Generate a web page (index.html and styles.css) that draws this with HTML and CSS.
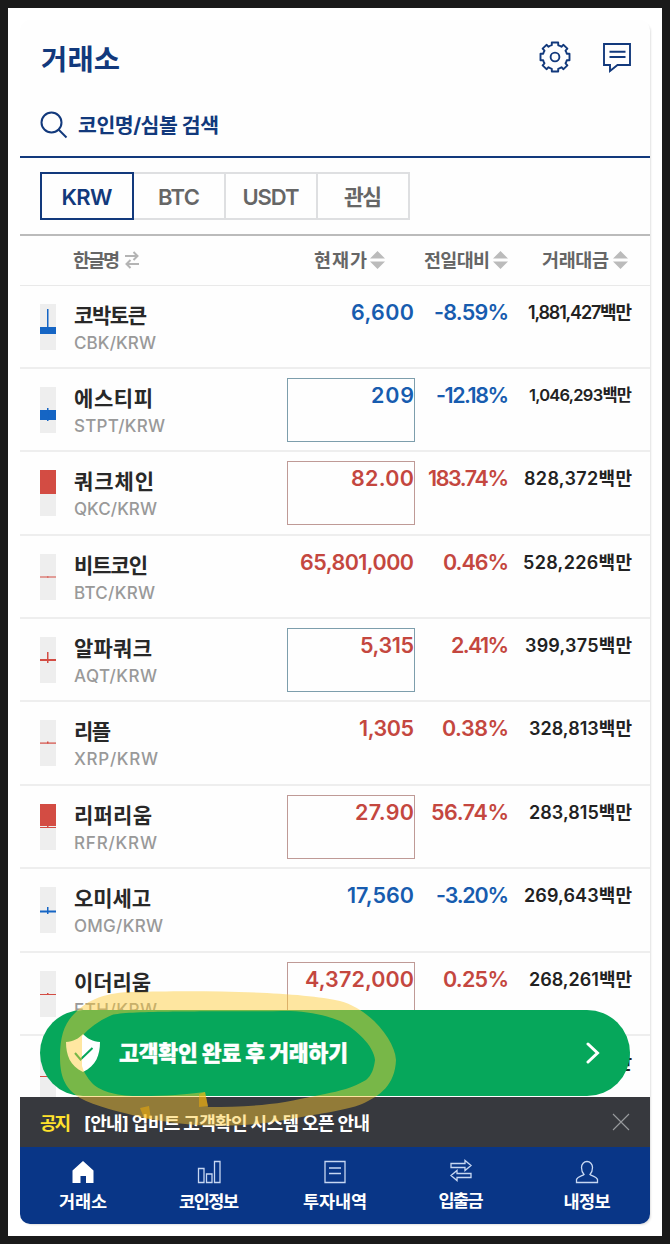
FILE: index.html
```html
<!DOCTYPE html>
<html lang="ko">
<head>
<meta charset="utf-8">
<title>거래소</title>
<link rel="stylesheet" href="styles.css">
</head>
<body>
<div class="frame">
<div class="screen">
  <header class="top">
    <h1 class="title"><span data-w="79">거래소</span></h1>
    <div class="actions">
      <svg width="32" height="32" viewBox="0 0 32 32" fill="none" stroke="#12397c" stroke-width="1.900" stroke-linejoin="round"><path d="M12.800 1.500h6.400v2.700q1.800.4 3.300 1.500l2-1.900 3.900 3.900-1.900 2q1 1.500 1.300 3.100h2.700v6.400h-2.700q-.4 1.700-1.300 3.100l1.900 2-3.900 3.900-2-1.900q-1.500 1-3.300 1.500v2.700h-6.400v-2.700q-1.800-.5-3.300-1.500l-2 1.900-3.900-3.900 1.900-2q-1-1.500-1.300-3.100H1.500v-6.400h2.700q.4-1.700 1.300-3.100l-1.900-2 3.900-3.900 2 1.900q1.500-1 3.300-1.500z"/><circle cx="16" cy="16" r="4.400"/></svg>
      <svg width="30" height="32" viewBox="0 0 30 32" fill="none" stroke="#12397c" stroke-width="1.900"><path d="M2 3h26v21H15.500L8 30v-6H2zM7.500 10.700h16M7.500 16h16"/></svg>
    </div>
  </header>
  <div class="search">
    <svg width="28" height="28" viewBox="0 0 28 28" fill="none" stroke="#12397c" stroke-width="2"><circle cx="11.500" cy="11.500" r="10"/><path d="M18.500 18.500l8 8"/></svg>
    <span class="search-text"><span data-w="141">코인명/심볼 검색</span></span>
  </div>
  <div class="tabs">
    <div class="tab active"><span data-w="51">KRW</span></div>
    <div class="tab"><span data-w="42">BTC</span></div>
    <div class="tab"><span data-w="57">USDT</span></div>
    <div class="tab ko"><span data-w="38">관심</span></div>
  </div>
  <div class="cols">
    <div class="col c-name"><span data-w="47">한글명</span><svg width="16" height="20" viewBox="0 0 16 20" fill="none" stroke="#b4b4b4" stroke-width="2"><path d="M1 6h12M9.500 2l4 4-4 4M15 14H3M6.500 10l-4 4 4 4"/></svg></div>
    <div class="col c-price"><span data-w="53">현재가</span><svg class="sort" viewBox="0 0 15 18"><path d="M0 7.500L7.500 0 15 7.500zM0 10.500h15L7.500 18z"/></svg></div>
    <div class="col c-rate"><span data-w="66">전일대비</span><svg class="sort" viewBox="0 0 15 18"><path d="M0 7.500L7.500 0 15 7.500zM0 10.500h15L7.500 18z"/></svg></div>
    <div class="col c-vol"><span data-w="67">거래대금</span><svg class="sort" viewBox="0 0 15 18"><path d="M0 7.500L7.500 0 15 7.500zM0 10.500h15L7.500 18z"/></svg></div>
  </div>
  <div class="list" id="list"></div>
  <div class="notice">
    <span class="tag"><span data-w="31">공지</span></span>
    <span class="msg"><span data-w="286">[안내] 업비트 고객확인 시스템 오픈 안내</span></span>
    <svg width="18" height="18" viewBox="0 0 18 18" fill="none" stroke="#97999c" stroke-width="1.100"><path d="M1 1l16 16M17 1L1 17"/></svg>
  </div>
  <nav class="nav">
    <div class="item on"><svg width="24" height="24" viewBox="0 0 24 24" fill="#fff"><path d="M12 1l10.500 9.500V23H15v-7H9.500v7h-8V10.500z"/></svg><span data-w="48">거래소</span></div>
    <div class="item"><svg width="24" height="24" viewBox="0 0 24 24"><path d="M1.500 8.500H7v14H1.500zM9.500 14H15v8.500H9.500zM17.500 1.500H23v21h-5.500z"/></svg><span data-w="60">코인정보</span></div>
    <div class="item"><svg width="24" height="24" viewBox="0 0 24 24"><path d="M2 1.500h20v21H2zM6 8h12M6 13.500h12"/></svg><span data-w="64">투자내역</span></div>
    <div class="item lift"><svg width="24" height="24" viewBox="0 0 24 24"><path d="M2 4.500h14V1.500L22 6.500l-6 5V8.500H2zM22 18.500H8v3L2 16.500l6-5v3h14z"/></svg><span data-w="45">입출금</span></div>
    <div class="item"><svg width="24" height="24" viewBox="0 0 24 24"><path d="M1.500 22.500v-3c1-3 6-3.500 7.500-5C7 12.500 6.500 10 6.500 7.500 6.500 4 9 1.500 12 1.500s5.500 2.500 5.500 6c0 2.500-.5 5-2.500 7 1.500 1.500 6.500 2 7.500 5v3z"/></svg><span data-w="47">내정보</span></div>
  </nav>
  <div class="cta">
    <svg width="36" height="40" viewBox="0 0 36 40"><path d="M18 1c4 4.500 10 7.500 17 8 0 13-4 24-17 30C5 33 1 22 1 9c7-.5 13-3.500 17-8z" fill="#fff"/><path d="M10 20l5.500 6.500L27.500 15" fill="none" stroke="#06a75b" stroke-width="2"/></svg>
    <span class="cta-text"><span data-w="229">고객확인 완료 후 거래하기</span></span>
    <svg width="14" height="22" viewBox="0 0 14 22" fill="none" stroke="#fff" stroke-width="3" stroke-linecap="round"><path d="M2 2l9.500 9L2 20"/></svg>
  </div>
  <svg class="marker" width="336" height="136" viewBox="60 991 336 136" fill="#ffca32" fill-opacity=".46">
    <path fill-rule="evenodd" d="M60 1057C60 1035 65 1022 76 1012C88 1000 105 992 135 992C190 990 300 991 340 1001C370 1009 395 1040 396 1060C395 1085 380 1096 362 1104C345 1111 315 1114 285 1120C240 1128 190 1128 140 1117C120 1112 95 1106 80 1098C64 1088 60 1075 60 1057ZM82 1036C90 1027 100 1020 112 1015C130 1010 230 1012 290 1011C310 1012 325 1015 340 1021C356 1029 374 1046 375 1060C374 1068 372 1075 366 1080C352 1088 340 1091 325 1094Q300 1099 285 1102C260 1106 235 1107 208 1107L205 1092C175 1096 155 1096 137 1096C115 1096 98 1090 92 1083Q84 1074 82 1066Z"/>
    <path d="M199 1094l6-2 3 14-9 1zM140 1108l9-2 2 13-7-1z" fill="#ffb400"/>
  </svg>
</div>
</div>
<script src="script.js"></script>
</body>
</html>
```
FILE: styles.css
```css
* { box-sizing: border-box; }
body {
  margin: 0;
  width: 670px;
  height: 1244px;
  padding: 8px;
  background: #1a1a1a;
  font-family: Inter, "Noto Sans CJK KR", sans-serif;
}
span { white-space: nowrap; }
svg { flex: none; display: block; }
[data-w] { display: inline-block; }
.frame { width: 654px; height: 1228px; padding: 12px; background: #fff; }
.screen {
  position: relative;
  display: flex;
  flex-direction: column;
  width: 630px;
  height: 1204px;
  overflow: hidden;
  border-radius: 10px;
  background: #fefefe;
  box-shadow: 2px 2px 2px -1px #e2e2e2;
}
.top { display: flex; justify-content: space-between; height: 74px; padding: 21px 18px 0 21px; }
.title { margin: 0; color: #12397c; font-size: 28.500px; line-height: 37px; font-weight: 700; }
.actions { display: flex; gap: 31px; }
.search { display: flex; align-items: center; gap: 10px; height: 64px; padding: 0 20px 0; border-bottom: 2px solid #12397c; color: #12397c; }
.search-text { font-size: 20.500px; line-height: 28px; font-weight: 700; padding-top: 2px; }
.tabs { display: flex; height: 78px; padding: 14px 20px; border-bottom: 2px solid #bbb; }
.tab { width: 92px; height: 48px; border: solid #dedfe1; border-width: 2px 2px 2px 0; text-align: center; font-size: 22px; line-height: 46px; font-weight: 600; color: #666; }
.tab.active { width: 94px; border: 2px solid #12397c; color: #12397c; }
.tab.ko { font-size: 21.500px; line-height: 46px; font-weight: 700; }
.cols, .row { display: grid; grid-template-columns: 54px 213px 128px 94px 123px; }
.cols { height: 49.500px; border-bottom: 1.500px solid #e9e9e9; color: #666; font-size: 18.500px; font-weight: 700; align-items: center; }
.col { display: flex; align-items: center; line-height: 28px; }
.c-name { grid-column: 2; gap: 4px; margin-left: -1px; }
.c-price { justify-content: flex-end; gap: 3px; padding-right: 30px; }
.c-rate { justify-content: flex-end; gap: 3px; padding-right: 1px; }
.c-vol { justify-content: flex-end; gap: 4px; padding-right: 4px; }
.sort { width: 15px; height: 18px; fill: #bbb; }
.list { flex: 1; min-height: 0; overflow: hidden; }
.row { height: 83.400px; border-bottom: 2px solid #eee; }
.candle { margin: 18px 0 0 20px; }
.name { font-size: 21px; line-height: 28px; font-weight: 700; color: #282828; padding-top: 16px; }
.sub { font-size: 17px; line-height: 24px; font-weight: 500; color: #999; padding-top: 1px; }
.price { height: 64px; margin-top: 9px; border: 1px solid transparent; text-align: right; font-size: 21.500px; line-height: 32px; font-weight: 600; }
.rate { padding-top: 10px; text-align: right; font-size: 21.500px; line-height: 32px; font-weight: 600; }
.vol { padding: 10px 0 0; text-align: right; font-size: 18px; line-height: 33px; font-weight: 600; color: #222; }
.vol.small { font-size: 16.500px; }
.down { color: #175caf; }
.up { color: #c4473f; }
.box-blue { border-color: #7d9eac; }
.box-red { border-color: #bf9a96; }
.notice { display: flex; align-items: center; height: 50px; padding: 0 20px; background: #37393e; color: #fff; font-size: 18px; line-height: 28px; font-weight: 700; }
.tag { color: #ffe22c; margin-right: 13px; padding-top: 3px; }
.msg { flex: 1; padding-top: 3px; }
.nav { display: flex; height: 77px; background: #093687; color: #fff; }
.item { width: 126px; display: flex; flex-direction: column; align-items: center; padding-top: 13px; gap: 5px; font-size: 17.500px; line-height: 26px; font-weight: 700; }
.item svg { fill: none; stroke: #c7d7f2; stroke-width: 1.300; }
.item.on svg { fill: #fff; stroke: none; }
.item.lift { padding-top: 12px; }
.cta { position: absolute; left: 20px; top: 990px; width: 590px; height: 86px; border-radius: 43px; background: #06a75b; color: #fff; display: flex; align-items: center; padding: 0 30px 0 25px; }
.cta-text { flex: 1; margin-left: 18px; font-size: 21.500px; line-height: 30px; font-weight: 900; -webkit-text-stroke: .4px #fff; }
.marker { position: absolute; left: 40px; top: 971px; }
```
FILE: script.js
```js
// name, symbol, price, rate, volume, direction, box, candle [bodyTop, bodyHeight, wickTop, wickHeight], widths [name, symbol, price, rate, volume]
const coins = [
  ["코박토큰", "CBK", "6,600", "-8.59%", "1,881,427", "down", "", [23, 7, 5, 25], [73, 82, 63, 75, 104]],
  ["에스티피", "STPT", "209", "-12.18%", "1,046,293", "down", "box-blue", [23, 10, 21, 13], [79, 91, 43, 73, 103]],
  ["쿼크체인", "QKC", "82.00", "183.74%", "828,372", "up", "box-red", [0, 24, 0, 24], [80, 83, 63, 81, 108]],
  ["비트코인", "BTC", "65,801,000", "0.46%", "528,226", "up", "", [22.500, 1, 22.500, 1], [74, 81, 114, 66, 109]],
  ["알파쿼크", "AQT", "5,315", "2.41%", "399,375", "up", "box-blue", [22, 2, 15, 11], [78, 83, 54, 58, 107]],
  ["리플", "XRP", "1,305", "0.38%", "328,813", "up", "", [22.500, 1.200, 21.500, 2], [37, 84, 55, 67, 103]],
  ["리퍼리움", "RFR", "27.90", "56.74%", "283,815", "up", "box-red", [0, 22, 22, 2], [78, 83, 59, 78, 103]],
  ["오미세고", "OMG", "17,560", "-3.20%", "269,643", "down", "", [23.500, 2, 20, 7], [77, 89, 67, 73, 108]],
  ["이더리움", "ETH", "4,372,000", "0.25%", "268,261", "up", "box-red", [23, 1, 22, 2], [77, 83, 109, 66, 103]],
  ["", "", "", "", "", "up", "", [22, 1, 22, 1], [0, 0, 0, 0, 37]]
];

document.getElementById("list").innerHTML = coins.map(([name, sym, price, rate, vol, dir, box, c, w]) => {
  const color = dir === "up" ? "#d34c43" : "#1565c4";
  const line = sym === "RFR" ? `<path d="M0 23.500h16" stroke="${color}"/>` : "";
  return `<div class="row">
    <svg class="candle" width="16" height="46" viewBox="0 0 16 46"><path fill="#eee" d="M0 0h16v46H0z"/>
      <rect y="${c[0]}" width="16" height="${c[1]}" fill="${color}"/><rect x="7" y="${c[2]}" width="1.500" height="${c[3]}" fill="${color}"/>${line}</svg>
    <div><div class="name"><span data-w="${w[0]}">${name}</span></div><div class="sub"><span data-w="${w[1]}">${sym ? sym + "/KRW" : ""}</span></div></div>
    <div class="price ${dir} ${box}"><span data-w="${w[2]}">${price}</span></div>
    <div class="rate ${dir}"><span data-w="${w[3]}">${rate}</span></div>
    <div class="vol${sym === "STPT" ? " small" : ""}"><span data-w="${w[4]}">${vol}백만</span></div>
  </div>`;
}).join("");

document.querySelectorAll("[data-w]").forEach(el => {
  const n = el.textContent.length;
  if (n < 2) return;
  const gap = (Number(el.dataset.w) - el.getBoundingClientRect().width) / (n - 1);
  el.style.letterSpacing = gap + "px";
  el.style.marginRight = -gap + "px";
});
```
